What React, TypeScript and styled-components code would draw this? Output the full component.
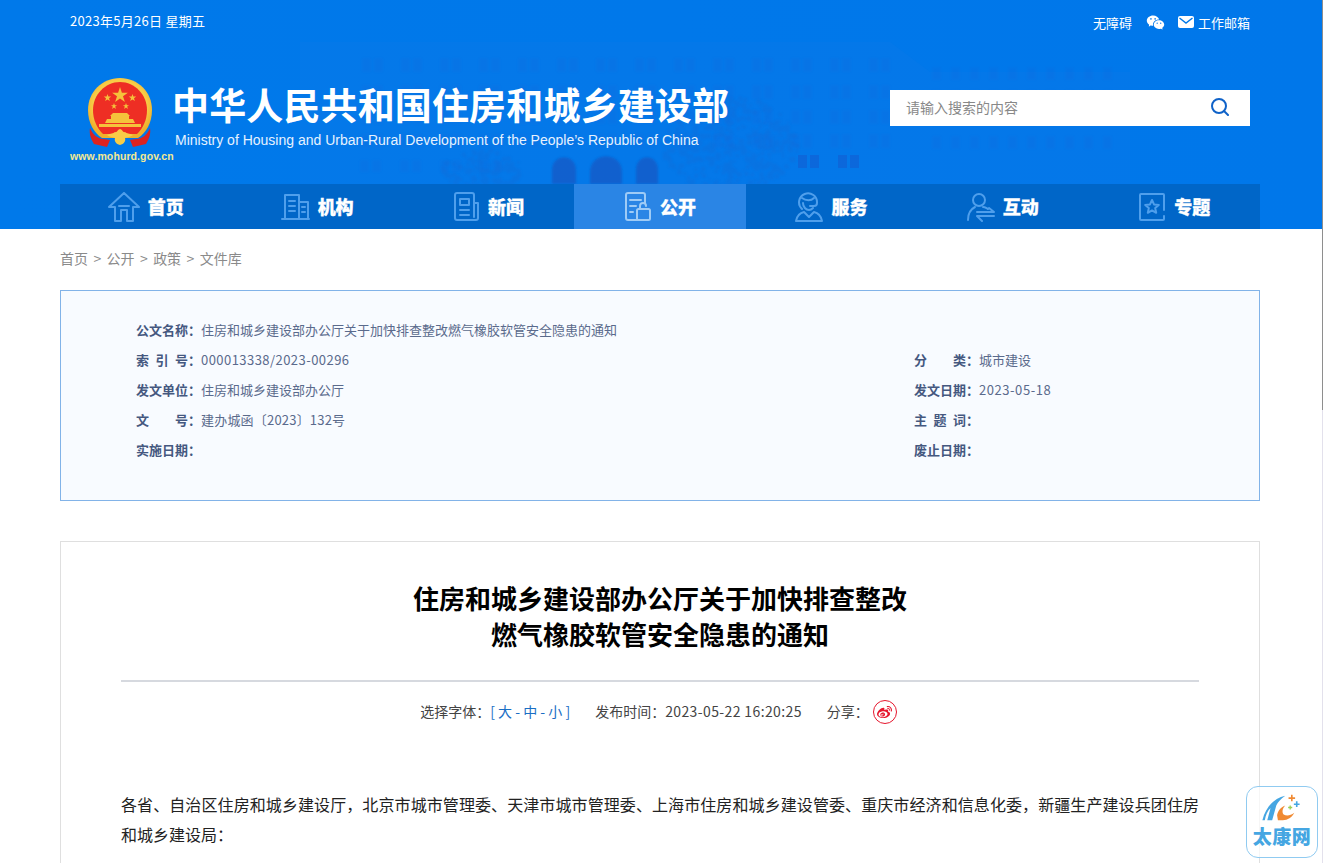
import React from "react";
import styled, { createGlobalStyle } from "styled-components";
import { RiWechatFill } from "react-icons/ri";
import { FaWeibo } from "react-icons/fa";

const CJK = `"Noto Sans CJK SC", "Liberation Sans", sans-serif`;
const COLON = "\uFF1A";
const BODY_TEXT =
  "各省、自治区住房和城乡建设厅\uFF0C北京市城市管理委、天津市城市管理委、上海市住房和城乡建设管委、重庆市经济和信息化委\uFF0C新疆生产建设兵团住房和城乡建设局\uFF1A";

const Global = createGlobalStyle`
  html, body { margin: 0; padding: 0; height: 863px; overflow: hidden; background: #fff; }
  body { font-family: ${CJK}; color: #333; }
  * { box-sizing: border-box; }
`;

const Page = styled.div`
  position: relative;
  width: 1323px;
  height: 863px;
  overflow: hidden;
`;

const Header = styled.header`
  position: relative;
  height: 229px;
  background: linear-gradient(90deg, #0079ea 0%, #0077ea 100%);
  overflow: hidden;
`;

const Backdrop = styled.svg`
  position: absolute;
  left: 0;
  top: 0;
  pointer-events: none;
`;

const Wrap = styled.div`
  position: relative;
  width: 1200px;
  margin-left: 60px;
  height: 100%;
  display: flex;
  flex-direction: column;
`;

const TopBar = styled.div`
  height: 42px;
  padding: 0 10px;
  display: flex;
  align-items: center;
  justify-content: space-between;
  font-size: 13px;
  color: #fff;
`;

const DateText = styled.span`
  letter-spacing: 0.27px;
  margin-top: -2px;
`;

const TopLinks = styled.div`
  display: flex;
  align-items: center;
  padding-top: 2px;
`;

const TopLink = styled.span<{ $gap?: number }>`
  display: inline-flex;
  align-items: center;
  margin-left: ${(p) => p.$gap ?? 0}px;
  gap: 4px;
`;

const Brand = styled.div`
  margin-top: 36px;
  padding: 0 10px;
  display: flex;
  align-items: flex-start;
`;

const Seal = styled.div`
  width: 104px;
  display: flex;
  flex-direction: column;
  align-items: flex-start;
`;

const SealMark = styled.div`
  margin-left: 17px;
  height: 71px;
`;

const SealUrl = styled.div`
  font-family: "Liberation Sans", sans-serif;
  font-size: 10.5px;
  font-weight: 700;
  letter-spacing: 0.1px;
  line-height: 14px;
  color: #f4ea93;
  white-space: nowrap;
`;

const Titles = styled.div`
  flex: 1;
`;

const Title = styled.h1`
  margin: -1px 0 1px -2px;
  font-size: 37px;
  font-weight: 700;
  letter-spacing: 0.14px;
  line-height: 54px;
  color: #fff;
  white-space: nowrap;
`;

const SubTitle = styled.div`
  font-family: "Liberation Sans", sans-serif;
  font-size: 14px;
  line-height: 16px;
  padding-left: 1px;
  color: #e6f2ff;
  white-space: nowrap;
`;

const SearchBox = styled.div`
  margin-top: 12px;
  width: 360px;
  height: 36px;
  background: #fff;
  display: flex;
  align-items: center;
  justify-content: space-between;
  padding: 0 21px 2px 16px;
  font-size: 14px;
  color: #888;
`;

const Nav = styled.nav`
  margin-top: auto;
  height: 45px;
  background: #0066c8;
  display: grid;
  grid-template-columns: repeat(7, 1fr);
`;

const NavLabel = styled.span`
  margin-top: -2px;
  -webkit-text-stroke: 0.3px #fff;
`;

const NavItem = styled.a<{ $active?: boolean }>`
  display: flex;
  align-items: center;
  justify-content: center;
  gap: 8px;
  font-size: 18px;
  font-weight: 900;
  color: #fff;
  background: ${(p) => (p.$active ? "#2a85e5" : "transparent")};
  svg {
    fill: none;
    stroke: ${(p) => (p.$active ? "#9ecbf6" : "#4f9fec")};
    stroke-width: 2;
    stroke-linejoin: round;
    stroke-linecap: round;
  }
`;

const Crumbs = styled.div`
  margin: 0 0 0 60px;
  height: 61px;
  padding-bottom: 3px;
  display: flex;
  align-items: center;
  font-size: 14px;
  color: #8a8a8a;
  gap: 5.4px;
`;

const InfoBox = styled.section`
  width: 1200px;
  height: 211px;
  margin-left: 60px;
  border: 1px solid #82b3e8;
  background: #f8fbff;
  padding: 23px 0 0 75px;
  display: grid;
  grid-template-columns: 778px 1fr;
  grid-auto-rows: 30px;
  font-size: 13px;
  color: #5a6a8c;
`;

const InfoFull = styled.div`
  grid-column: 1 / -1;
  display: flex;
  align-items: center;
`;

const InfoCell = styled.div`
  display: flex;
  align-items: center;
`;

const InfoKey = styled.b`
  display: inline-block;
  width: 52px;
  text-align: justify;
  text-align-last: justify;
  font-weight: 700;
  color: #45587f;
`;

const InfoColon = styled.b`
  width: 13px;
  font-weight: 700;
  color: #45587f;
`;

const InfoValue = styled.span<{ $spacing?: number }>`
  letter-spacing: ${(p) => p.$spacing ?? 0}px;
`;

const Article = styled.article`
  width: 1200px;
  height: 340px;
  margin: 40px 0 0 60px;
  border: 1px solid #dfdfdf;
  border-bottom: 0;
  padding: 38px 60px 0;
  background: #fff;
`;

const ArticleTitle = styled.h2`
  margin: 0;
  text-align: center;
  font-size: 26px;
  font-weight: 700;
  line-height: 36px;
  color: #000;
`;

const Rule = styled.hr`
  margin: 28px 0 0;
  border: 0;
  height: 2px;
  background: #d6d9df;
`;

const Meta = styled.div`
  margin-top: 18px;
  height: 24px;
  padding-right: 3px;
  display: flex;
  align-items: center;
  justify-content: center;
  font-size: 14px;
  color: #444;
`;

const MetaItem = styled.span<{ $left?: number }>`
  margin-left: ${(p) => p.$left ?? 0}px;
  margin-top: -2px;
  white-space: nowrap;
`;

const Sizes = styled.span`
  color: #1a6ec4;
`;

const Time = styled.span`
  letter-spacing: 0.38px;
`;

const Weibo = styled.span`
  margin-left: 4px;
  width: 24px;
  height: 24px;
  border: 1px solid #e6162d;
  border-radius: 50%;
  display: inline-flex;
  align-items: center;
  justify-content: center;
  color: #e6162d;
  font-size: 15px;
`;

const Para = styled.p`
  margin: 65px 0 0;
  font-size: 16px;
  line-height: 30px;
  color: #222;
  text-align: justify;
`;

const Rail = styled.div`
  position: absolute;
  right: 0;
  top: 0;
  width: 1px;
  height: 863px;
  background: #e3e1ec;
`;

const RailThumb = styled.div`
  width: 1px;
  height: 410px;
  background: #8e8e8e;
`;

const Badge = styled.div`
  position: absolute;
  left: 1246px;
  top: 786px;
  width: 72px;
  height: 72px;
  border: 1px solid #90cbf1;
  border-radius: 12px;
  background: rgba(255, 255, 255, 0.72);
  display: flex;
  flex-direction: column;
  align-items: center;
  padding-top: 7px;
`;

const BadgeText = styled.div`
  font-size: 19px;
  font-weight: 900;
  line-height: 24px;
  letter-spacing: 0.5px;
  color: #45a6e2;
  margin-top: 3px;
`;

const Emblem = () => (
  <svg width="68" height="71" viewBox="0 0 68 71">
    <defs>
      <radialGradient id="gold" cx="50%" cy="45%" r="55%">
        <stop offset="75%" stopColor="#f8cd47" />
        <stop offset="100%" stopColor="#eeb02c" />
      </radialGradient>
    </defs>
    <path d="M33 0C15 0 1 14 1 32c0 13 6 23 14 28h36c8-5 14-15 14-28C65 14 51 0 33 0Z" fill="url(#gold)" />
    <path d="M33 4C18 4 6 17 6 32c0 10 4 18 10 24h34c6-6 10-14 10-24C60 17 48 4 33 4Z" fill="#ee2e24" />
    <g fill="#f5c23b">
      <path d="M33 9l1.900 5.700h6l-4.900 3.600 1.900 5.800L33 20.500 28.100 24.100l1.900-5.800-4.900-3.600h6Z" />
      <path d="M20.500 16l.9 2.600h2.800l-2.200 1.700.8 2.700-2.300-1.600-2.300 1.600.8-2.700-2.200-1.700h2.800Z" />
      <path d="M45.500 16l.9 2.600h2.800l-2.200 1.700.8 2.700-2.300-1.600-2.300 1.600.8-2.700-2.200-1.700h2.800Z" />
      <path d="M27 25l.8 2.200h2.300l-1.900 1.400.7 2.300-1.900-1.400-1.900 1.400.7-2.300-1.900-1.400h2.300Z" />
      <path d="M39 25l.8 2.200h2.300l-1.900 1.400.7 2.300-1.900-1.400-1.900 1.400.7-2.300-1.900-1.400h2.300Z" />
      <path d="M26 35h14l3 3H23Z" />
      <rect x="24" y="38" width="18" height="3" />
      <path d="M20 41h26l2 4H18Z" />
      <rect x="12" y="46" width="42" height="3" />
    </g>
    <path d="M3 50c3 7 8 11 14 11l6 1-3 7-13-3c-3-5-5-10-4-16Z" fill="#dc2320" />
    <path d="M63 50c-3 7-8 11-14 11l-6 1 3 7 13-3c3-5 5-10 4-16Z" fill="#dc2320" />
    <path d="M20 57c4-2 6-1 8-3 2 1 3-3 5-3s3 4 5 3c2 2 4 1 8 3-3 2-5 2-8 3 1 3-1 6-5 7-4-1-6-4-5-7-3-1-5-1-8-3Z" fill="#f8cd47" />
  </svg>
);

const Icon: React.FC<{ w?: number; children: React.ReactNode }> = ({ w = 32, children }) => (
  <svg width={w} height="30" viewBox={`0 0 ${w} 30`}>{children}</svg>
);

const navIcons = {
  home: (
    <Icon>
      <path d="M1 15 16 1l15 14h-6v14H19V18h-6v11H7V15Z" />
      <path d="M11 14h10" />
    </Icon>
  ),
  org: (
    <Icon w={29}>
      <path d="M4 26V3h14v23M18 10h9v16M1 27h27" />
      <path d="M8 9h6M8 14h6M8 19h6M21 15h3M21 20h3" />
    </Icon>
  ),
  news: (
    <Icon w={27}>
      <path d="M19 28H4a2 2 0 0 1-2-2V3a2 2 0 0 1 2-2h15a2 2 0 0 1 2 2v22M21 11h4v15a2 2 0 0 1-2 2h-4" />
      <rect x="7" y="7" width="9" height="6" />
      <path d="M7 18h9M7 23h9" />
    </Icon>
  ),
  open: (
    <Icon w={28}>
      <path d="M14 28H4a2 2 0 0 1-2-2V3a2 2 0 0 1 2-2h15a2 2 0 0 1 2 2v8" />
      <path d="M6 8h11M6 14h6M6 20h3" />
      <rect x="13" y="17" width="13" height="11" rx="1.500" />
      <path d="M16 17v-3a3 3 0 0 1 6 0" />
    </Icon>
  ),
  service: (
    <Icon w={28}>
      <path d="M7 17a9 9 0 1 1 15-6c0 2-1 3-3 3h-4" />
      <path d="M7 6c4 3 9 3 12 0M8 11c0 4 3 7 6 7 2 0 3-1 4-2" />
      <path d="M9 20c-5 1-7 4-8 9h26c-1-5-3-8-8-9l-5 5Z" />
    </Icon>
  ),
  interact: (
    <Icon w={28}>
      <circle cx="12" cy="8" r="6" />
      <path d="M1 28c0-7 3-11 7-13M16 15c2 0 3 1 5 2" />
      <path d="M10 20h17l-5-4M27 24H10l5 5" />
    </Icon>
  ),
  topic: (
    <Icon w={28}>
      <path d="M26 18V3a1 1 0 0 0-1-1H3a1 1 0 0 0-1 1v24a1 1 0 0 0 1 1h22a1 1 0 0 0 1-1v-3" />
      <path d="M14 8l2 4.400 4.800.5-3.600 3.200 1 4.700-4.200-2.400-4.200 2.400 1-4.700-3.600-3.200 4.800-.5Z" />
    </Icon>
  ),
};

const treeDots = (cx: number, cy: number, rx: number, ry: number, n: number, seed: number) => {
  const dots: React.ReactNode[] = [];
  let s = seed;
  const next = () => {
    s = (s * 9301 + 49297) % 233280;
    return s / 233280;
  };
  for (let i = 0; i < n; i++) {
    const a = next() * Math.PI * 2;
    const r = Math.sqrt(next());
    dots.push(
      <circle
        key={`${seed}-${i}`}
        cx={cx + Math.cos(a) * r * rx}
        cy={cy + Math.sin(a) * r * ry}
        r={1 + next() * 2.2}
      />
    );
  }
  return dots;
};

const Building = () => {
  const win: React.ReactNode[] = [];
  const strong: React.ReactNode[] = [];
  [58, 85, 110, 134].forEach((y) => {
    for (let x = 362; x < 870; x += 39) {
      win.push(<rect key={`a${x}${y}`} x={x} y={y} width="9" height="14" />);
      win.push(<rect key={`d${x}${y}`} x={x + 12} y={y} width="9" height="14" />);
    }
  });
  [67, 90, 112, 136].forEach((y) => {
    for (let x = 932; x < 1120; x += 19) {
      win.push(<rect key={`b${x}${y}`} x={x} y={y} width="9" height="13" />);
    }
  });
  [798, 838].forEach((x) => {
    strong.push(<rect key={`s${x}`} x={x} y="155" width="9" height="13" />);
    strong.push(<rect key={`t${x}`} x={x + 12} y="155" width="9" height="13" />);
  });
  [360, 400, 440, 480].forEach((x) => {
    win.push(<rect key={`e${x}`} x={x} y="160" width="9" height="12" />);
    win.push(<rect key={`f${x}`} x={x + 12} y="160" width="9" height="12" />);
  });
  return (
    <Backdrop width="1323" height="229" viewBox="0 0 1323 229">
      <defs>
        <filter id="soft"><feGaussianBlur stdDeviation="0.8" /></filter>
      </defs>
      <path d="M300 42h590l40 30h200v112H300Z" fill="#2b7fe0" opacity="0.1" />
      <g fill="#1a5fd4" opacity="0.13" filter="url(#soft)">{win}</g>
      <g fill="#1459cf" opacity="0.5">{strong}</g>
      <g fill="#1459c4" opacity="0.72" filter="url(#soft)">
        <path d="M552 184v-14c0-17 24-17 24 0v14ZM590 184v-12c0-21 32-21 32 0v12ZM636 184v-14c0-17 22-17 22 0v14Z" />
      </g>
      <g fill="#1a62c8" opacity="0.2" filter="url(#soft)">
        {treeDots(730, 145, 68, 48, 420, 7)}
        {treeDots(482, 170, 40, 20, 120, 31)}
      </g>
    </Backdrop>
  );
};

const Info: React.FC<{ k: string; v?: string; spacing?: number }> = ({ k, v, spacing }) => (
  <InfoCell>
    <InfoKey>{k}</InfoKey>
    <InfoColon>{COLON}</InfoColon>
    <InfoValue $spacing={spacing}>{v}</InfoValue>
  </InfoCell>
);

export default function App() {
  return (
    <Page>
      <Global />
      <Header>
        <Building />
        <Wrap>
          <TopBar>
            <DateText>2023年5月26日 星期五</DateText>
            <TopLinks>
              <TopLink>无障碍</TopLink>
              <TopLink $gap={14}>
                <RiWechatFill size={19} />
              </TopLink>
              <TopLink $gap={13}>
                <svg width="16" height="12" viewBox="0 0 16 12">
                  <rect width="16" height="12" rx="2" fill="#fff" />
                  <path d="M1.500 2 8 7l6.500-5" fill="none" stroke="#0078e8" strokeWidth="1.400" />
                </svg>
                工作邮箱
              </TopLink>
            </TopLinks>
          </TopBar>
          <Brand>
            <Seal>
              <SealMark><Emblem /></SealMark>
              <SealUrl>www.mohurd.gov.cn</SealUrl>
            </Seal>
            <Titles>
              <Title>中华人民共和国住房和城乡建设部</Title>
              <SubTitle>Ministry of Housing and Urban-Rural Development of the People’s Republic of China</SubTitle>
            </Titles>
            <SearchBox>
              请输入搜索的内容
              <svg width="18" height="18" viewBox="0 0 18 18" fill="none" stroke="#0f62c8" strokeWidth="2">
                <circle cx="8" cy="8" r="7" />
                <path d="m13 13 4 4" strokeLinecap="round" />
              </svg>
            </SearchBox>
          </Brand>
          <Nav>
            <NavItem>{navIcons.home}<NavLabel>首页</NavLabel></NavItem>
            <NavItem>{navIcons.org}<NavLabel>机构</NavLabel></NavItem>
            <NavItem>{navIcons.news}<NavLabel>新闻</NavLabel></NavItem>
            <NavItem $active>{navIcons.open}<NavLabel>公开</NavLabel></NavItem>
            <NavItem>{navIcons.service}<NavLabel>服务</NavLabel></NavItem>
            <NavItem>{navIcons.interact}<NavLabel>互动</NavLabel></NavItem>
            <NavItem>{navIcons.topic}<NavLabel>专题</NavLabel></NavItem>
          </Nav>
        </Wrap>
      </Header>
      <Crumbs>
        <span>首页</span><span>&gt;</span><span>公开</span><span>&gt;</span><span>政策</span><span>&gt;</span><span>文件库</span>
      </Crumbs>
      <InfoBox>
        <InfoFull>
          <InfoKey>公文名称</InfoKey>
          <InfoColon>{COLON}</InfoColon>
          住房和城乡建设部办公厅关于加快排查整改燃气橡胶软管安全隐患的通知
        </InfoFull>
        <Info k="索引号" v="000013338/2023-00296" spacing={0.45} />
        <Info k="分类" v="城市建设" />
        <Info k="发文单位" v="住房和城乡建设部办公厅" />
        <Info k="发文日期" v="2023-05-18" spacing={0.55} />
        <Info k="文号" v="建办城函〔2023〕132号" spacing={0.2} />
        <Info k="主题词" />
        <Info k="实施日期" />
        <Info k="废止日期" />
      </InfoBox>
      <Article>
        <ArticleTitle>
          住房和城乡建设部办公厅关于加快排查整改
          <br />
          燃气橡胶软管安全隐患的通知
        </ArticleTitle>
        <Rule />
        <Meta>
          <MetaItem>{`选择字体${COLON}`}<Sizes>[ 大 - 中 - 小 ]</Sizes></MetaItem>
          <MetaItem $left={25}>{`发布时间${COLON}`}<Time>2023-05-22 16:20:25</Time></MetaItem>
          <MetaItem $left={25}>{`分享${COLON}`}</MetaItem>
          <Weibo><FaWeibo /></Weibo>
        </Meta>
        <Para>{BODY_TEXT}</Para>
      </Article>
      <Rail><RailThumb /></Rail>
      <Badge>
        <svg width="40" height="27" viewBox="2 2 48 33">
          <path d="M2 34C6 18 16 7 30 4c-6 4-9 8-11 12l-5 18H8l4-15c-4 4-6 9-7 15Z" fill="#45a6e2" />
          <path d="M21 34h6C33 34 38 31 41 25c-5 4-10 4-13 2-2-2-2-7 2-11-6 2-9 7-10 12Z" fill="#f08a33" />
          <path d="M38 3v8M34 7h8" stroke="#f08a33" strokeWidth="2" />
          <path d="M44 11v7M40.500 14.500h7" stroke="#45a6e2" strokeWidth="2" />
          <path d="M36 16v5M33.500 18.500h5" stroke="#9ccf53" strokeWidth="1.600" />
        </svg>
        <BadgeText>太康网</BadgeText>
      </Badge>
    </Page>
  );
}
